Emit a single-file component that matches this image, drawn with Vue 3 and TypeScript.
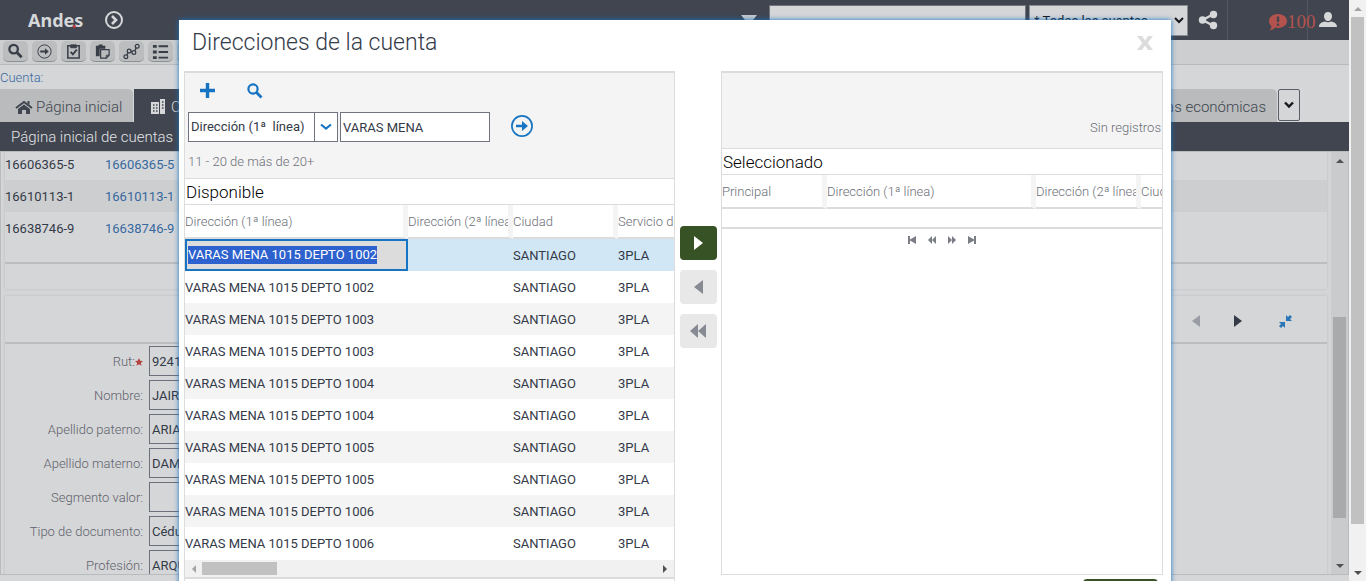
<script setup lang="ts">
import { nextTick, onMounted, ref } from 'vue'

interface Address {
  line1: string
  line2: string
  city: string
  service: string
}

const numbers = ['1002', '1002', '1003', '1003', '1004', '1004', '1005', '1005', '1006', '1006']
const addresses = ref<Address[]>(
  numbers.map((n) => ({ line1: `VARAS MENA 1015 DEPTO ${n}`, line2: '', city: 'SANTIAGO', service: '3PLA' })),
)
const accounts = ['16606365-5', '16610113-1', '16638746-9']
const fields = ref([
  { id: 'rut', label: 'Rut:', value: '9241', required: true },
  { id: 'nombre', label: 'Nombre:', value: 'JAIR', required: false },
  { id: 'paterno', label: 'Apellido paterno:', value: 'ARIA', required: false },
  { id: 'materno', label: 'Apellido materno:', value: 'DAM', required: false },
  { id: 'segmento', label: 'Segmento valor:', value: '', required: false },
  { id: 'documento', label: 'Tipo de documento:', value: 'Cédu', required: false },
  { id: 'profesion', label: 'Profesión:', value: 'ARQU', required: false },
])
const query = ref('VARAS MENA')
const globalQuery = ref('')

const setEditor = ref<HTMLInputElement[]>([])
onMounted(async () => {
  await nextTick()
  const editor = setEditor.value[0]
  if (editor) {
    editor.focus()
    editor.select()
  }
})
</script>

<template>
  <div class="shell">
    <div class="page">
      <header class="top">
        <span class="brand">Andes<i class="dot"></i></span>
        <button class="plain" aria-label="Expandir menú">
          <svg width="20" height="20" viewBox="0 0 20 20" fill="none" stroke="#d6d7d9"><circle cx="10" cy="10" r="8" stroke-width="2" /><path d="M8 6l4 4-4 4" stroke-width="2.6" /></svg>
        </button>
        <svg class="drop" width="16" height="10" viewBox="0 0 16 10"><path d="M0 0h16L8 10z" fill="#c8cacc" /></svg>
        <input v-model="globalQuery" class="global" aria-label="Buscar" />
        <select class="scope" aria-label="Ámbito"><option>* Todas las cuentas</option></select>
        <button class="plain share" aria-label="Compartir">
          <svg width="20" height="20" viewBox="0 0 20 20"><path d="M15 4.500L4.500 10L15 15.500" fill="none" stroke="#d6d7d9" stroke-width="2.500" /><g fill="#d6d7d9"><circle cx="15.500" cy="4.500" r="3.700" /><circle cx="4.500" cy="10" r="3.700" /><circle cx="15.500" cy="15.500" r="3.700" /></g></svg>
        </button>
        <button class="plain alerts">
          <svg width="19" height="18" viewBox="0 0 19 18"><path d="M10 1c5 0 9 3 9 7s-4 7-9 7c-1 0-2 0-3-.4C6 16 4 17 1.500 17 3 16 3.500 14.500 3.500 13 1.800 11.800 1 10 1 8c0-4 4-7 9-7z" fill="#b4534e" /><path d="M10 3.500v5.500M10 10.500v2.200" stroke="#404550" stroke-width="2.400" /></svg>
          <span>100</span>
        </button>
        <button class="plain user" aria-label="Usuario">
          <svg width="18" height="18" viewBox="0 0 18 18" fill="#d6d7d9"><path d="M9 1c2.600 0 4 1.800 4 4.200S11.300 10 9 10 5 7.600 5 5.200 6.400 1 9 1z" /><path d="M0 16c0-3.500 2.500-4.800 6-5.500 1.800 1 4.200 1 6 0 3.500.7 6 2 6 5.500z" /></svg>
        </button>
      </header>

      <nav class="tools" aria-label="Herramientas">
        <button aria-label="Buscar"><svg viewBox="0 0 18 18"><circle cx="7" cy="6.500" r="4.500" fill="none" stroke="currentColor" stroke-width="2.400" /><path d="M10.500 10l5 5" stroke="currentColor" stroke-width="3" /></svg></button>
        <button aria-label="Ejecutar"><svg viewBox="0 0 18 18"><circle cx="9" cy="9" r="7" fill="none" stroke="currentColor" /><path d="M4.500 8h5V5.500L13.500 9l-4 3.500V10h-5z" fill="currentColor" /></svg></button>
        <button aria-label="Tareas"><svg viewBox="0 0 18 18" fill="none" stroke="currentColor"><path d="M5.500 3H3v13h12V3h-2.500" stroke-width="1.600" /><path d="M6 2h6v3H6z" fill="currentColor" /><path d="M6 9.500l2.300 2.500L12.500 7" stroke-width="2" /></svg></button>
        <button aria-label="Pegar"><svg viewBox="0 0 18 18"><path d="M2 3h3V1.500h4V3h3v3H6v8H2z" fill="currentColor" /><path d="M7 7h9v6l-3 3H7z" fill="#b9bbbc" stroke="currentColor" stroke-width="1.300" /><path d="M13 16v-3h3" fill="none" stroke="currentColor" /></svg></button>
        <button aria-label="Flujo"><svg viewBox="0 0 18 18" fill="none" stroke="currentColor" stroke-width="1.300"><circle cx="3" cy="14.500" r="2" /><circle cx="6.500" cy="8.500" r="2" /><circle cx="11.500" cy="10" r="2" /><circle cx="15" cy="3.500" r="2" /><path d="M4 12.700l1.500-2.400M8.500 9h1M12.500 8.200l1.500-3" stroke-width="1.500" /></svg></button>
        <button aria-label="Lista"><svg viewBox="0 0 18 18" fill="currentColor"><path d="M1 2h4v3H1zM1 8h4v3H1zM1 14h4v3H1zM7 2.500h10v2H7zM7 8.500h10v2H7zM7 14.500h10v2H7z" /></svg></button>
        <button aria-label="Más"></button>
      </nav>

      <div class="account">Cuenta:</div>

      <div class="tabs">
        <a href="#" class="tab first"><svg width="18" height="14" viewBox="0 0 18 14"><path d="M1 8l8-6 8 6" fill="none" stroke="#404550" stroke-width="2" /><path d="M3 9l6-4.500L15 9v5h-4v-4H7v4H3zM12.500 1h2v4l-2-1.500z" fill="#404550" /></svg>Página inicial</a>
        <a href="#" class="tab active"><svg width="15" height="16" viewBox="0 0 15 16"><path d="M0 3h8v12H0zM9 0h5v15H9z" fill="#d6d7d9" /><path d="M2 6h1.500M5 6h1.500M2 9h1.500M5 9h1.500M2 12h1.500M5 12h1.500M11 3h1.500M11 6h1.500M11 9h1.500" stroke="#404550" stroke-width="1.500" /></svg>C</a>
        <a href="#" class="tab last">as económicas</a>
        <button class="more" aria-label="Más pestañas"><svg width="10" height="8" viewBox="0 0 10 8"><path d="M1 1.500l4 4 4-4" fill="none" stroke="#16181d" stroke-width="2.400" /></svg></button>
      </div>
      <h1 class="title">Página inicial de cuentas</h1>

      <div class="content">
        <div class="cards">
          <section class="card list">
            <table>
              <tbody>
                <tr v-for="a in accounts" :key="a"><td class="rut">{{ a }}</td><td><a href="#">{{ a }}</a></td></tr>
              </tbody>
            </table>
            <div class="listfoot"></div>
          </section>
          <section class="card form">
            <div class="formtop">
              <button class="plain" aria-label="Anterior"><svg width="8" height="12" viewBox="0 0 8 12"><path d="M8 0v12L0 6z" fill="#9b9da6" /></svg></button>
              <button class="plain" aria-label="Siguiente"><svg width="8" height="12" viewBox="0 0 8 12"><path d="M0 0v12l8-6z" fill="#343a46" /></svg></button>
              <button class="plain collapse" aria-label="Contraer"><svg width="13" height="13" viewBox="0 0 13 13" fill="#2b76b8"><path d="M7 0v6h6l-2-2 2-2-2-2-2 2zM0 7h6v6l-2-2-2 2-2-2 2-2z" /></svg></button>
            </div>
            <div class="fields">
              <div v-for="f in fields" :key="f.id" class="field">
                <label :for="f.id">{{ f.label }}<svg v-if="f.required" width="8" height="8" viewBox="0 0 10 10"><path d="M5 0l1.500 3.400 3.500.3-2.700 2.400.9 3.700L5 7.900 1.800 9.800l.9-3.700L0 3.700l3.500-.3z" fill="#b4423e" /></svg></label>
                <input :id="f.id" v-model="f.value" />
              </div>
            </div>
          </section>
        </div>
        <div class="bar vertical dim" aria-hidden="true">
          <i class="arrow up"></i><div class="track"><div class="gap-a"></div><div class="thumb"></div><div class="gap-b"></div></div><i class="arrow down"></i>
        </div>
      </div>
    </div>

    <div class="bar vertical outer" aria-hidden="true">
      <i class="arrow up pale"></i><div class="track"><div class="thumb"></div><div class="gap-b"></div></div><i class="arrow down"></i>
    </div>

    <div class="dialog" role="dialog" aria-labelledby="dialog-title">
      <div class="dialoghead">
        <h2 id="dialog-title">Direcciones de la cuenta</h2>
        <button class="plain" aria-label="Cerrar"><svg width="16" height="14" viewBox="0 0 16 14"><path d="M0 0h5l3 4.500L11 0h5l-5.300 7L16 14h-5L8 9.500 5 14H0l5.300-7z" fill="#dcdcdc" /></svg></button>
      </div>
      <div class="columns">
        <section class="panel available">
          <div class="filter">
            <div class="actions">
              <button class="plain" aria-label="Nuevo"><svg width="15" height="15" viewBox="0 0 15 15"><path d="M7.500 0v15M0 7.500h15" stroke="#1774c2" stroke-width="3.400" /></svg></button>
              <button class="plain" aria-label="Consultar"><svg width="16" height="16" viewBox="0 0 16 16" fill="none" stroke="#1774c2"><circle cx="6" cy="6" r="4.600" stroke-width="2.200" /><path d="M9.500 9.500l5 5" stroke-width="2.800" /></svg></button>
            </div>
            <div class="search">
              <div class="picker">
                <select aria-label="Campo"><option>Dirección (1ª&nbsp; línea)</option></select>
                <svg class="chev" width="12" height="8" viewBox="0 0 12 8"><path d="M1 1.500l5 4 5-4" fill="none" stroke="#1774c2" stroke-width="2.200" /></svg>
              </div>
              <input v-model="query" aria-label="Valor" />
              <button class="plain go" aria-label="Ir"><svg width="22" height="22" viewBox="0 0 22 22"><circle cx="11" cy="11" r="10.100" fill="none" stroke="#1774c2" stroke-width="1.700" /><path d="M5 9.800h6V6l6 5-6 5v-3.800H5z" fill="#1774c2" /></svg></button>
            </div>
            <p class="count">11 - 20 de más de 20+</p>
          </div>
          <h3>Disponible</h3>
          <div class="clip">
            <table class="grid wide">
              <colgroup><col class="w223" /><col class="w105" /><col class="w105" /><col class="w209" /></colgroup>
              <thead><tr><th>Dirección (1ª línea)</th><th>Dirección (2ª línea)</th><th>Ciudad</th><th>Servicio de despacho</th></tr></thead>
              <tbody>
                <tr v-for="(r, i) in addresses" :key="i" :class="{ chosen: i === 0 }">
                  <td v-if="i === 0" class="editing"><input ref="setEditor" v-model="r.line1" aria-label="Dirección (1ª línea)" /></td>
                  <td v-else>{{ r.line1 }}</td>
                  <td>{{ r.line2 }}</td><td>{{ r.city }}</td><td>{{ r.service }}</td>
                </tr>
              </tbody>
            </table>
          </div>
          <div class="bar horizontal" aria-hidden="true">
            <i class="arrow left pale"></i><div class="track"><div class="thumb"></div><div class="gap-b"></div></div><i class="arrow right"></i>
          </div>
          <div class="tail"></div>
        </section>

        <div class="movers">
          <button class="go-add" aria-label="Agregar"><svg width="9" height="14" viewBox="0 0 9 14"><path d="M0 0v14l9-7z" fill="#fff" /></svg></button>
          <button aria-label="Quitar"><svg width="9" height="14" viewBox="0 0 9 14"><path d="M9 0v14L0 7z" fill="#878a93" /></svg></button>
          <button aria-label="Quitar todo"><svg width="16" height="14" viewBox="0 0 16 14"><path d="M8 0v14L0 7zM16 0v14L8 7z" fill="#878a93" /></svg></button>
        </div>

        <div class="side">
          <section class="panel selected">
            <div class="filter empty">Sin registros</div>
            <h3>Seleccionado</h3>
            <div class="clip">
              <table class="grid wide">
                <colgroup><col class="w105" /><col class="w209" /><col class="w105" /><col class="w105" /></colgroup>
                <thead><tr><th>Principal</th><th>Dirección (1ª línea)</th><th>Dirección (2ª línea)</th><th>Ciudad</th></tr></thead>
              </table>
            </div>
            <div class="blank"></div>
            <div class="pager">
              <button class="plain" aria-label="Primero"><svg width="8" height="8" viewBox="0 0 8 8"><path d="M0 0h2v3.500L8 0v8L2 4.500V8H0z" /></svg></button>
              <button class="plain" aria-label="Anterior"><svg width="8" height="8" viewBox="0 0 8 8"><path d="M4 0v8L0 4zM8 0v8L4 4z" /></svg></button>
              <button class="plain" aria-label="Siguiente"><svg width="8" height="8" viewBox="0 0 8 8"><path d="M0 0v8l4-4zM4 0v8l4-4z" /></svg></button>
              <button class="plain" aria-label="Último"><svg width="8" height="8" viewBox="0 0 8 8"><path d="M8 0H6v3.500L0 0v8l6-3.500V8h2z" /></svg></button>
            </div>
          </section>
          <button class="accept" aria-label="Aceptar"></button>
        </div>
      </div>
    </div>
  </div>
</template>

<style>
body { overflow: hidden; }
</style>

<style scoped>
* { box-sizing: border-box; }
.shell { position: relative; display: flex; height: 100vh; overflow: hidden; font: 300 13px/18px Roboto, sans-serif; color: #333a48; background: #d5d6d8; }
.page { flex: 1; min-width: 0; display: flex; flex-direction: column; padding-bottom: 6px; }
input, select, button { font: inherit; color: inherit; border-radius: 0; margin: 0; }
input:focus { outline: none; }
.plain { display: flex; align-items: center; justify-content: center; padding: 0; border: 0; background: none; }
svg { display: block; flex: none; }
a { text-decoration: none; color: inherit; }

.top { flex: none; display: flex; align-items: center; height: 40px; padding-left: 28px; background: #404550; }
.brand { position: relative; margin-right: 21px; font: 700 18px/24px "Noto Sans", sans-serif; color: #d6d7d9; }
.dot { position: absolute; right: 7px; bottom: 4px; width: 3px; height: 3px; border-radius: 2px; background: #c43a40; }
.drop { margin-left: auto; }
.global { width: 257px; height: 31px; margin-left: 12px; border: 1px solid #72757d; background: #d5d6d8; }
.scope { width: 159px; height: 31px; margin: 0 10px 0 3px; border: 1px solid #8a8d93; background: #d5d6d8; color: #16181d; font-weight: 400; }
.share { height: 40px; width: 30px; padding-right: 9px; border-right: 1px solid #525662; }
.alerts { justify-content: flex-start; height: 40px; width: 80px; padding: 3px 0 0 40px; border-right: 1px solid #525662; font: 400 19px/24px "Liberation Serif", serif; color: #b4534e; }
.user { margin: 0 12px 0 11px; }

.tools { flex: none; display: flex; gap: 4px; height: 25px; padding: 1px 3px 3px; border-bottom: 1px solid #b8babb; background: #cdcecf; overflow: hidden; }
.tools button { display: flex; align-items: center; justify-content: center; width: 25px; height: 21px; padding: 0; border: 0; border-bottom: 1px solid #8d9092; border-radius: 5px; background: #bbbdbe; color: #383d48; }
.tools svg { width: 17px; height: 17px; }
.account { flex: none; height: 24px; line-height: 26px; color: #35699f; }
.tabs { flex: none; display: flex; align-items: stretch; height: 33px; padding-right: 49px; font-size: 15px; }
.tab { display: flex; align-items: center; padding-top: 2px; border-radius: 0 5px 0 0; background: #b9bbbc; color: #404550; }
.first { width: 133px; gap: 3px; margin-right: 1px; padding-left: 15px; }
.active { width: 140px; padding-left: 17px; gap: 5px; background: #404550; color: #d6d7d9; border-radius: 0; }
.last { width: 140px; margin-left: auto; padding-right: 11px; justify-content: flex-end; }
.more { display: flex; align-items: center; justify-content: center; width: 22px; height: 32px; margin-left: 1px; padding: 0; border: 1px solid #595d66; border-radius: 2px; background: #d5d6d8; }
.title { flex: none; margin: 0; height: 29px; padding-left: 11px; font-size: 15px; font-weight: 300; line-height: 30px; color: #e2e3e5; background: #404550; }

.content { flex: 1; min-height: 0; display: flex; border: 1px solid #b9bbbc; overflow: hidden; }
.cards { flex: 1; min-width: 0; display: flex; flex-direction: column; gap: 7px; padding: 0 4px; overflow: hidden; }
.card { box-shadow: 0 0 3px #bcbdbf; }
.list { flex: none; }
.list table { width: 100%; border-collapse: collapse; font-weight: 400; }
.list td { height: 32px; padding: 2px 0 0; }
.list tr:first-child td { height: 28px; padding: 0 0 2px; }
.list tr:nth-child(2) { background: #cdcecf; }
.rut { width: 100px; }
.list a { color: #35699f; }
.listfoot { height: 45px; padding-top: 18px; }
.listfoot::before { content: ""; display: block; border-top: 2px solid #bcbdbf; }
.form { flex: none; }
.formtop { display: flex; align-items: center; justify-content: flex-end; gap: 34px; height: 48px; padding: 4px 35px 0 0; border-bottom: 2px solid #bcbdbf; }
.collapse { margin-left: 3px; }
.fields { display: flex; flex-direction: column; gap: 4px; padding-top: 2px; }
.field { display: flex; gap: 6px; }
.field label { width: 138px; display: flex; align-items: center; justify-content: flex-end; padding-top: 2px; color: #5f626b; }
.field input { width: 150px; height: 30px; padding: 0 2px; border: 1px solid #6b6f7a; background: transparent; font-weight: 400; }

.bar { flex: none; display: flex; background: #f1f1f1; }
.vertical { width: 17px; flex-direction: column; }
.horizontal { height: 17px; margin-top: 1px; }
.track { flex: 1; display: flex; flex-direction: inherit; }
.vertical .track { padding: 0 2px; }
.horizontal .track { padding: 2px 0; }
.thumb { background: #c1c1c1; }
.arrow { flex: none; display: flex; align-items: center; justify-content: center; width: 17px; height: 17px; color: #505050; }
.arrow::before { content: ""; border: 4px solid transparent; }
.pale { color: #a3a3a3; }
.up::before { border-bottom-color: currentColor; border-top: 0; }
.down::before { border-top-color: currentColor; border-bottom: 0; }
.left::before { border-right-color: currentColor; border-left: 0; }
.right::before { border-left-color: currentColor; border-right: 0; }
.dim { background: #c9cbcc; }
.dim .thumb { flex: 201; background: #a8aaab; }
.dim .gap-a { flex: 148; }
.dim .gap-b { flex: 39; }
.outer .thumb { flex: 507; }
.outer .gap-b { flex: 40; }
.horizontal .thumb { flex: 75; }
.horizontal .gap-b { flex: 380; }

.dialog { position: absolute; top: 20px; left: 179px; right: 195px; min-height: 600px; padding: 0 8px 0 5px; background: #fff; box-shadow: 0 0 5px #1774c2; }
.dialoghead { display: flex; align-items: center; justify-content: space-between; height: 51px; padding: 0 10px 5px 8px; }
.dialoghead h2 { margin: 0; font-size: 23px; font-weight: 300; line-height: 26px; }
.columns { display: flex; align-items: flex-start; }
.panel { border: 1px solid #dcdcdc; border-top-width: 2px; }
.available { flex: 490 1 0; min-width: 0; }
.side { flex: 443 1 0; min-width: 0; display: flex; flex-direction: column; }
.selected { min-height: 504px; }
.filter { height: 106px; padding: 9px 3px 0; border-bottom: 1px solid #dcdcdc; background: #f4f4f4; }
.actions { display: flex; gap: 32px; padding-left: 12px; height: 17px; align-items: center; }
.search { display: flex; align-items: center; gap: 2px; margin-top: 13px; font-weight: 400; }
.picker { position: relative; width: 150px; height: 30px; }
.picker select { appearance: none; width: 100%; height: 30px; padding: 0 0 0 2px; border: 1px solid #6f7480; background: linear-gradient(#6f7480, #6f7480) right 22px top / 1px 100% no-repeat #fff; }
.chev { position: absolute; right: 6px; top: 11px; pointer-events: none; }
.search input { width: 150px; height: 30px; padding: 0 2px; border: 1px solid #6f7480; background: #fff; }
.go { margin: 0 0 2px 19px; }
.count { margin: 11px 0 0; color: #6c6f77; }
h3 { margin: 0; height: 26px; padding-left: 1px; border-bottom: 1px solid #dcdcdc; font-size: 17px; font-weight: 300; line-height: 26px; color: #000; }
.empty { height: 76px; padding: 46px 1px 0; text-align: right; color: #6c6f77; }
.clip { overflow: hidden; }
.grid { table-layout: fixed; border-collapse: separate; border-spacing: 0; font-weight: 400; }
.wide { width: 642px; }
.selected .wide { width: 524px; }
.w223 { width: 223px; }
.w209 { width: 209px; }
.w105 { width: 105px; }
.grid th { height: 34px; padding: 2px 0 0; border-right: 5px solid #f4f4f4; border-bottom: 2px solid #dcdcdc; text-align: left; font-weight: 300; color: #6c6f77; white-space: nowrap; overflow: hidden; }
.grid td { height: 32px; padding: 2px 0 0; white-space: nowrap; }
.grid tbody tr:nth-child(odd) { background: #f4f4f4; }
.grid tbody tr.chosen { background: #d1e7f5; }
.grid td.editing { padding: 0; border: 2px solid #1774c2; background: #dcdcdc; }
.editing input { display: block; width: 100%; height: 18px; padding: 0 1px; border: 0; background: transparent; line-height: 18px; }
.editing input::selection { background: rgba(43, 96, 206, 0.996); color: #fff; }
.tail { height: 30px; border-top: 2px solid #dcdcdc; }
.movers { flex: none; display: flex; flex-direction: column; align-items: flex-end; gap: 10px; width: 46px; padding: 155px 4px 0 0; }
.movers button { display: flex; align-items: center; justify-content: center; width: 37px; height: 34px; padding: 0; border: 0; border-radius: 4px; background: #e8e8e8; }
.movers .go-add { background: #375224; }
.blank { height: 20px; border-bottom: 2px solid #dcdcdc; }
.pager { display: flex; justify-content: center; gap: 12px; padding-top: 7px; fill: #7a7d84; }
.accept { align-self: flex-end; width: 75px; height: 30px; margin: 4px 5px 0 0; border: 0; border-radius: 4px; background: #375224; }
</style>
